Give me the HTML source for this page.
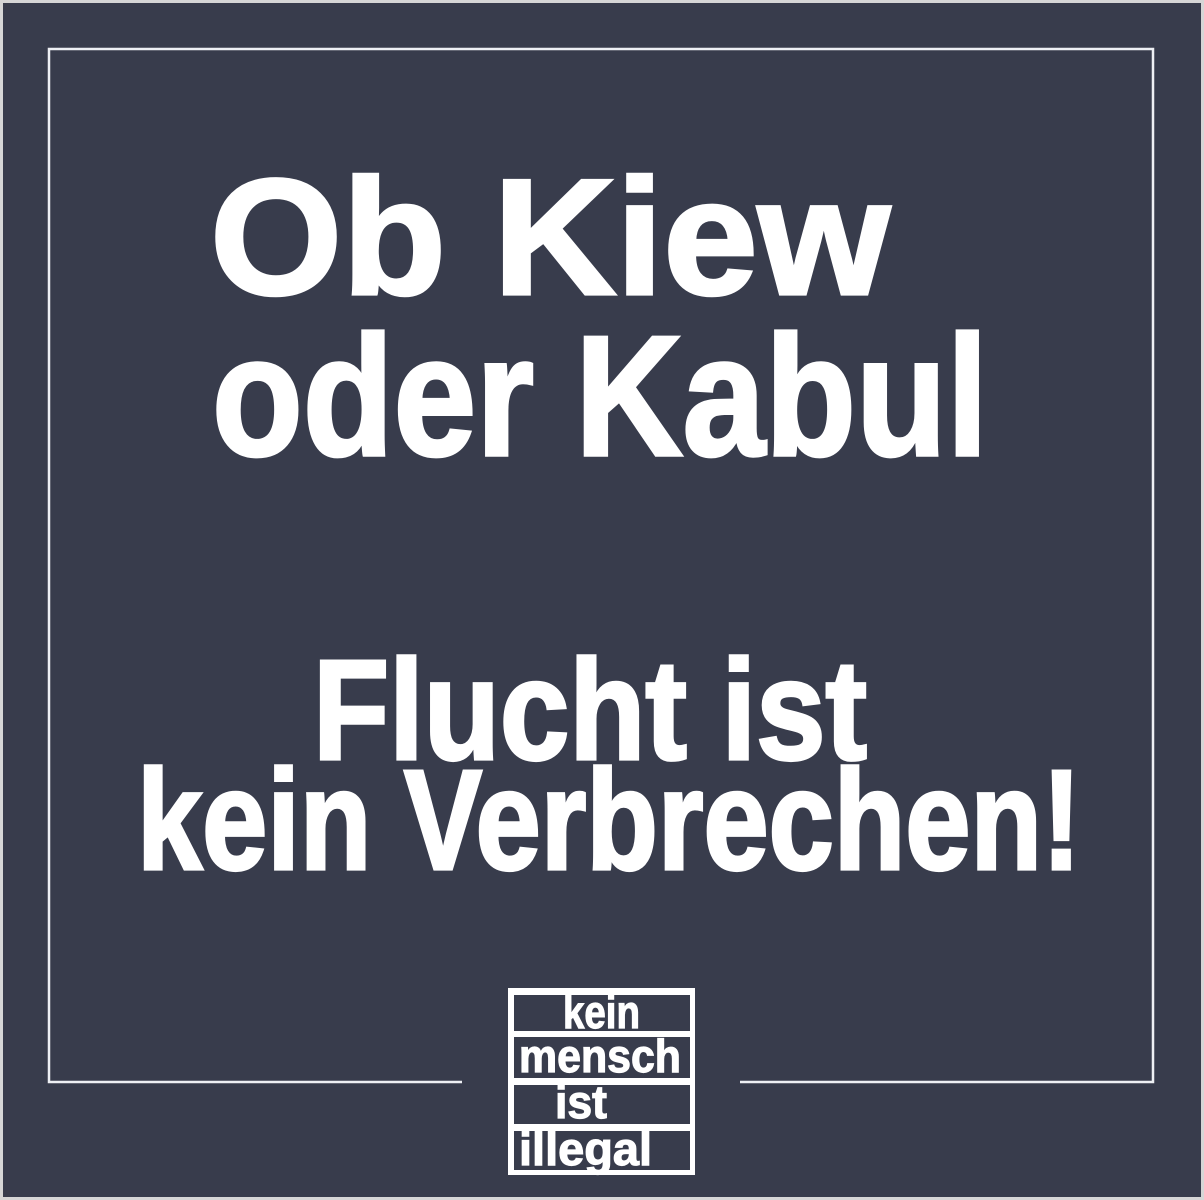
<!DOCTYPE html>
<html><head><meta charset="utf-8"><style>
html,body{margin:0;padding:0;background:#d9d9d9;}
svg{display:block}
</style></head><body>
<svg width="1204" height="1200" viewBox="0 0 1204 1200" xmlns="http://www.w3.org/2000/svg">
<rect x="0" y="0" width="1204" height="1200" fill="#d6d6d6"/>
<rect x="3" y="3" width="1198" height="1194" fill="#383c4c"/>
<path d="M462 1082 H49 V49 H1153 V1082 H740" fill="none" stroke="#eef0f4" stroke-width="2.5"/>
<g font-family="Liberation Sans, Arial, sans-serif" font-weight="bold" fill="#ffffff" stroke="#ffffff" stroke-width="3">
<text transform="translate(210,294) scale(1,1.1)" x="0" y="0" font-size="150" textLength="680" lengthAdjust="spacingAndGlyphs">Ob Kiew</text>
<text transform="translate(212,455) scale(1,1.14)" x="0" y="0" font-size="150" textLength="776" lengthAdjust="spacingAndGlyphs">oder Kabul</text>
<text transform="translate(313,759) scale(1,1.12)" x="0" y="0" font-size="127" textLength="554" lengthAdjust="spacingAndGlyphs">Flucht ist</text>
<text transform="translate(137,869) scale(1,1.12)" x="0" y="0" font-size="127" textLength="944" lengthAdjust="spacingAndGlyphs">kein Verbrechen!</text>
</g>
<rect x="508" y="988" width="187" height="187" fill="#fff"/>
<rect x="514" y="995" width="176" height="36" fill="#383c4c"/>
<rect x="514" y="1037" width="176" height="41" fill="#383c4c"/>
<rect x="514" y="1085" width="176" height="39" fill="#383c4c"/>
<rect x="514" y="1131" width="176" height="39" fill="#383c4c"/>
<g font-family="Liberation Sans, Arial, sans-serif" font-weight="bold" fill="#ffffff" stroke="#ffffff" stroke-width="1">
<text transform="translate(563,1028) scale(1,1.15)" font-size="40" textLength="77" lengthAdjust="spacingAndGlyphs">kein</text>
<text transform="translate(519,1072) scale(1,1.15)" font-size="40" textLength="162" lengthAdjust="spacingAndGlyphs">mensch</text>
<text transform="translate(555,1118) scale(1,1.15)" font-size="40" textLength="52" lengthAdjust="spacingAndGlyphs">ist</text>
<text transform="translate(519,1165) scale(1,1.15)" font-size="40" textLength="133" lengthAdjust="spacingAndGlyphs">illegal</text>
</g>
</svg>
</body></html>
